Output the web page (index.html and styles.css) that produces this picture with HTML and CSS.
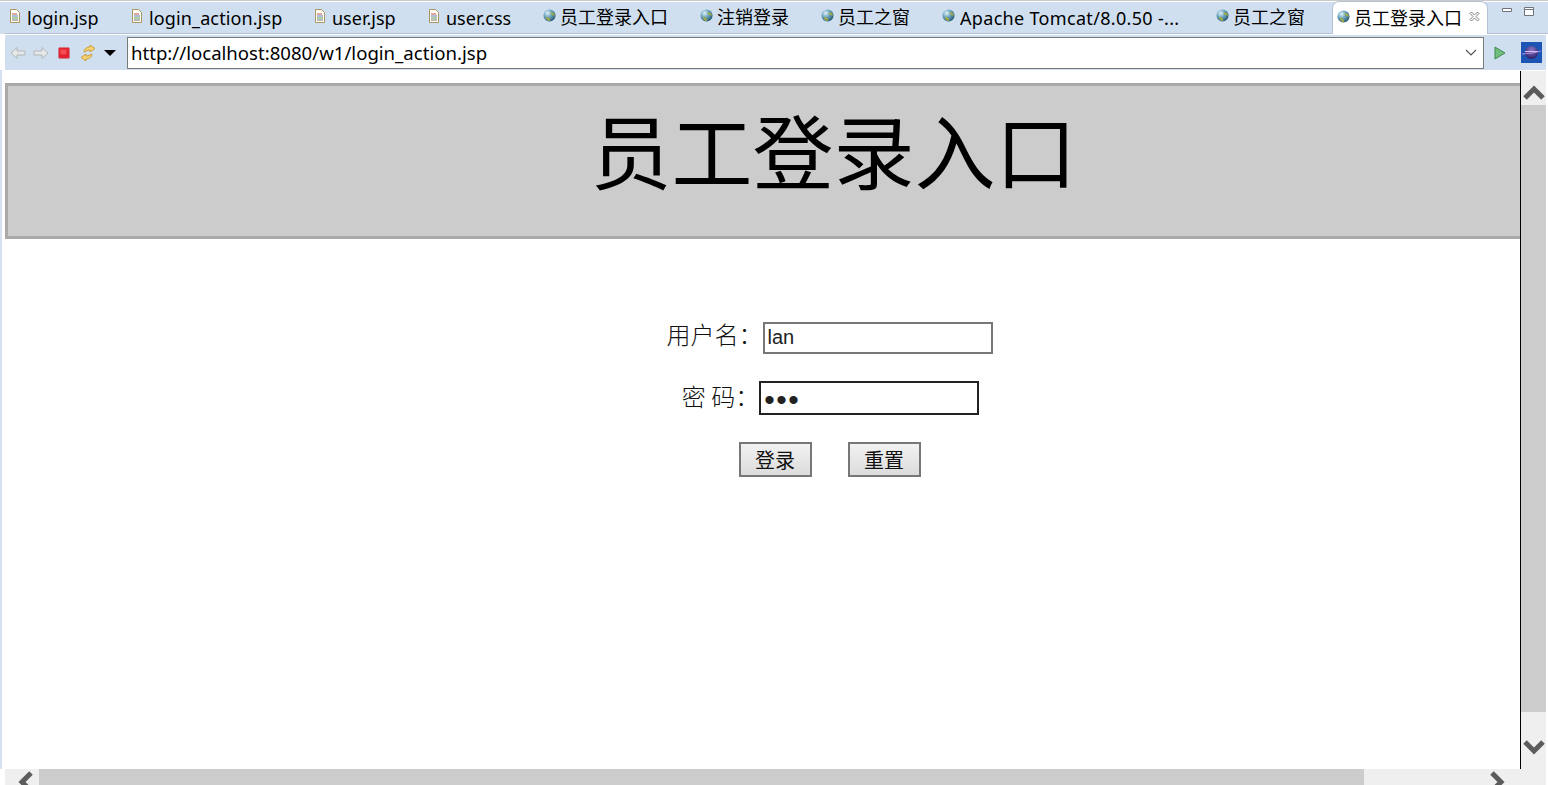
FILE: index.html
```html
<!DOCTYPE html>
<html lang="zh-CN">
<head>
<meta charset="utf-8">
<title>员工登录入口</title>
<link rel="stylesheet" href="styles.css">
</head>
<body>
<svg class="defs" width="0" height="0" aria-hidden="true">
  <defs>
    <radialGradient id="globe-fill" cx="35%" cy="30%" r="75%">
      <stop offset="0" stop-color="#e4f2f8"/>
      <stop offset=".45" stop-color="#6fa8c4"/>
      <stop offset="1" stop-color="#24566f"/>
    </radialGradient>
    <radialGradient id="planet-fill" cx="50%" cy="30%" r="70%">
      <stop offset="0" stop-color="#8d78c8"/>
      <stop offset="1" stop-color="#2a1f66"/>
    </radialGradient>
    <symbol id="doc" viewBox="0 0 12 14">
      <path d="M1.500.5h6l3 3v10h-9z" fill="#fffdf4" stroke="#a8955f"/>
      <path d="M3 5h5" stroke="#c05050"/><path d="M3 7h6" stroke="#5f7fb0"/>
      <path d="M3 9h6" stroke="#58a060"/><path d="M3 11h6" stroke="#777"/>
    </symbol>
    <symbol id="globe" viewBox="0 0 14 14">
      <circle cx="7" cy="7" r="6.500" fill="url(#globe-fill)"/>
      <path d="M3 9c2-1 3 0 4 1s1 3 0 3c-2 0-4-2-4-4zM8 4c2-1 4 0 5 3-2 0-3 0-4-1z" fill="#9aa84f"/>
    </symbol>
  </defs>
</svg>

<nav class="tabs">
  <div class="tab"><svg class="ico-doc"><use href="#doc"/></svg><span class="latin">login.jsp</span></div>
  <div class="tab"><svg class="ico-doc"><use href="#doc"/></svg><span class="latin latin-mid">login_action.jsp</span></div>
  <div class="tab"><svg class="ico-doc"><use href="#doc"/></svg><span class="latin">user.jsp</span></div>
  <div class="tab"><svg class="ico-doc"><use href="#doc"/></svg><span class="latin">user.css</span></div>
  <div class="tab tab-globe"><svg class="ico-globe"><use href="#globe"/></svg><span>员工登录入口</span></div>
  <div class="tab tab-globe"><svg class="ico-globe"><use href="#globe"/></svg><span>注销登录</span></div>
  <div class="tab tab-globe"><svg class="ico-globe"><use href="#globe"/></svg><span>员工之窗</span></div>
  <div class="tab tab-globe"><svg class="ico-globe"><use href="#globe"/></svg><span class="latin latin-long">Apache Tomcat/8.0.50 -...</span></div>
  <div class="tab tab-globe"><svg class="ico-globe"><use href="#globe"/></svg><span>员工之窗</span></div>
  <div class="tab tab-active">
    <svg class="ico-globe"><use href="#globe"/></svg><span>员工登录入口</span>
    <svg class="ico-close" viewBox="0 0 11 11"><path d="M1 2.500 2.500 1 5.500 4 8.500 1 10 2.500 7 5.500 10 8.500 8.500 10 5.500 7 2.500 10 1 8.500 4 5.500z" fill="#fff" stroke="#808080"/></svg>
  </div>
  <div class="win-btns">
    <svg class="win-btn" viewBox="0 0 11 11"><path d="M.5 2.500h9v3h-9z" fill="#fff" stroke="#6f747c"/></svg>
    <svg class="win-btn" viewBox="0 0 11 11"><path d="M.5 1.500h9v8h-9z" fill="#fff" stroke="#6f747c"/><path d="M.5 3.500h9" stroke="#6f747c"/></svg>
  </div>
</nav>

<div class="toolbar">
  <div class="nav-icons">
    <svg class="tool" viewBox="0 0 16 16"><path d="M1 8 7 2.500V6h8v4H7v3.500z" fill="#e6e8e8" stroke="#b4b7b7"/></svg>
    <svg class="tool" viewBox="0 0 16 16"><path d="M15 8 9 2.500V6H1v4h8v3.500z" fill="#e6e8e8" stroke="#b4b7b7"/></svg>
    <svg class="tool" viewBox="0 0 16 16"><rect x="2.500" y="2.500" width="11" height="11" rx="1.500" fill="#e4202e" stroke="#c98088"/><rect x="4.500" y="4.500" width="6" height="5" fill="#f24c55"/></svg>
    <svg class="tool tool-sync" viewBox="0 0 16 16"><path d="M4 7c0-3 3-5 6-5V0l5 3.500L10 7V5C8 5 6 6 4 7z" fill="#f5d273" stroke="#c9982f" stroke-width=".9"/><path d="M12 9c0 3-3 5-6 5v2l-5-3.500L6 9v2c2 0 4-1 6-2z" fill="#f5d273" stroke="#c9982f" stroke-width=".9"/></svg>
    <svg class="tool-drop" viewBox="0 0 12 6"><path d="M0 0h12L6 6z" fill="#000"/></svg>
  </div>
  <div class="address">
    <span class="address-text">http://localhost:8080/w1/login_action.jsp</span>
    <svg class="address-arrow" viewBox="0 0 12 7"><path d="M1 1l5 5 5-5" fill="none" stroke="#555" stroke-width="1.200"/></svg>
  </div>
  <svg class="go" viewBox="0 0 12 14"><path d="M1 1l10 6-10 6z" fill="#6fbe7c" stroke="#3f8a50"/></svg>
  <svg class="eclipse" viewBox="0 0 21 21">
    <rect width="21" height="21" fill="#1d55b5"/>
    <circle cx="10.500" cy="10.500" r="6.500" fill="url(#planet-fill)"/>
    <path d="M4 9.500h13" stroke="#d9c4f2"/>
    <path d="M1 12c6-.5 13-1 19-3" stroke="#b58adf" fill="none"/>
  </svg>
</div>

<div class="workspace">
  <div class="viewport">
    <main class="page">
      <h1 class="banner">员工登录入口</h1>
      <form class="login">
        <div class="row"><label class="field-label field-label-user" for="user">用户名：</label><input class="field" id="user" type="text" value="lan"></div>
        <div class="row row-pass"><label class="field-label" for="pass">密 码：</label><input class="field field-focus" id="pass" type="password" value="123"></div>
        <div class="actions"><button class="btn" type="button">登录</button><button class="btn" type="reset">重置</button></div>
      </form>
    </main>
  </div>
  <div class="vbar">
    <div class="vbar-end"><svg class="chev" viewBox="0 0 22 15"><path d="M2 13 11 4l9 9" fill="none" stroke="#5c5c5c" stroke-width="5"/></svg></div>
    <div class="vbar-thumb"></div>
    <div class="vbar-end vbar-end-low"><svg class="chev" viewBox="0 0 22 15"><path d="M2 2l9 9 9-9" fill="none" stroke="#5c5c5c" stroke-width="5"/></svg></div>
  </div>
</div>

<div class="hbar">
  <div class="hbar-end"><svg class="chev-h" viewBox="0 0 15 22"><path d="M13 2 4 11l9 9" fill="none" stroke="#5c5c5c" stroke-width="5"/></svg></div>
  <div class="hbar-thumb"></div>
  <div class="hbar-rest"><svg class="chev-h" viewBox="0 0 15 22"><path d="M2 2l9 9-9 9" fill="none" stroke="#5c5c5c" stroke-width="5"/></svg></div>
</div>
</body>
</html>
```
FILE: styles.css
```css
* { box-sizing: border-box; }
html, body { margin: 0; height: 100%; overflow: hidden; }
body {
  width: 1548px;
  height: 785px;
  background: #fff;
  display: flex;
  flex-direction: column;
  font-family: "Noto Sans", "Noto Sans CJK SC", sans-serif;
  color: #000;
}
.defs { position: absolute; }

/* tab strip */
.tabs {
  height: 35px;
  flex: none;
  padding-left: 4px;
  display: grid;
  grid-template-columns: 122px 183px 114px 115px 157px 121px 121px 274px 121px 156px 60px;
  background: linear-gradient(#cfdfef, #cfdfef) 0 1px / 100% 32px no-repeat, #fff;
  border-top: 1px solid #c9c9c9;
  position: relative;
}
.tabs::after {
  content: "";
  position: absolute;
  left: 5px; right: 0; top: 32px;
  height: 1px;
  background: #b4c0d4;
}
.tab {
  height: 32px;
  display: flex;
  align-items: center;
  gap: 6px;
  padding-left: 5px;
  font-size: 18px;
  line-height: 32px;
  white-space: nowrap;
}
.tab-globe { gap: 4px; }
.latin { padding-top: 1px; }
.latin-mid { letter-spacing: .13px; }
.latin-long { letter-spacing: .32px; margin-left: 1px; }
.tab-active {
  position: relative;
  z-index: 1;
  height: 33px;
  background: #fff;
  border: 1px solid #b4c0d4;
  border-bottom: 0;
  border-radius: 7px 7px 0 0;
  padding-left: 4px;
  gap: 4px;
}
.ico-doc { width: 12px; height: 14px; flex: none; margin-bottom: 3px; }
.ico-globe { width: 13px; height: 13px; flex: none; margin-bottom: 3px; }
.ico-close { width: 11px; height: 11px; margin-left: 3px; margin-bottom: 4px; }
.win-btns { display: flex; gap: 11px; padding: 5px 0 0 14px; }
.win-btn { width: 11px; height: 11px; }

/* toolbar */
.toolbar {
  height: 35px;
  flex: none;
  margin-left: 5px;
  margin-right: 2px;
  background: #cfdfef;
  display: flex;
  align-items: center;
}
.nav-icons { width: 122px; flex: none; display: flex; align-items: center; padding-left: 5px; gap: 7px; }
.tool { width: 16px; height: 16px; flex: none; }
.tool-sync { margin-left: 1px; margin-right: -1px; }
.tool-drop { width: 12px; height: 6px; margin-left: 2px; }
.address {
  width: 1357px;
  height: 32px;
  flex: none;
  background: #fff;
  border: 1px solid #7a7a7a;
  display: flex;
  align-items: center;
  justify-content: space-between;
  padding: 0 6px 0 3px;
  font-size: 18.600px;
}
.address-arrow { width: 12px; height: 7px; }
.go { width: 12px; height: 14px; margin-left: 10px; flex: none; }
.eclipse { width: 21px; height: 21px; margin-left: 15px; flex: none; }

/* content */
.workspace {
  flex: 1;
  min-height: 0;
  display: flex;
  padding-top: 1px;
  border-left: 2px solid #d5e0f0;
  padding-right: 2px;
}
.viewport { flex: 1; min-width: 0; overflow: hidden; border-right: 1px solid #000; }
.page { width: 1653px; margin-left: 1px; padding-top: 12px; }
.banner {
  margin: 0 -4px 0 2px;
  height: 156px;
  padding-left: 2px;
  background: #ccc;
  border: 3px solid #aaa;
  font-family: "Noto Sans CJK SC", sans-serif;
  font-weight: 400;
  font-size: 81px;
  line-height: 124px;
  text-align: center;
}
.login {
  padding-top: 83px;
  display: flex;
  flex-direction: column;
  align-items: center;
  gap: 27px;
}
.row { display: flex; align-items: center; }
.row-pass { padding-left: 2px; }
.field-label {
  font-family: "Noto Sans CJK SC", sans-serif;
  font-size: 24px;
  line-height: 30px;
  font-weight: 300;
  margin-top: -4px;
  color: #111;
}
.field-label-user { margin-top: -8px; }
.field {
  width: 230px;
  height: 32px;
  border: 2px solid #777;
  background: #fff;
  padding: 0 3px 2px;
  font-family: "Liberation Sans", sans-serif;
  font-size: 20px;
  color: #222;
  outline: 0;
}
.field-focus {
  width: 220px;
  height: 34px;
  border-color: #222;
  padding: 3px 3px 0;
  font-size: 30px;
  letter-spacing: 1.500px;
}
.actions { display: flex; gap: 36px; }
.btn {
  width: 73px;
  height: 35px;
  padding: 0;
  border: 2px solid #777;
  background: linear-gradient(#f2f2f2, #dcdcdc);
  font-family: "Noto Sans CJK SC", sans-serif;
  font-size: 20px;
  line-height: 30px;
  color: #111;
}

/* scrollbars */
.vbar {
  width: 25px;
  flex: none;
  background: #efefef;
  display: flex;
  flex-direction: column;
}
.vbar-end { height: 34px; flex: none; display: flex; justify-content: center; align-items: center; padding-top: 8px; }
.vbar-end-low { height: 57px; align-items: flex-end; padding: 0 0 14px; }
.vbar-thumb { flex: 1; background: #ccc; }
.chev { width: 22px; height: 15px; }
.hbar {
  height: 16px;
  flex: none;
  margin: 0 2px 0 5px;
  background: #efefef;
  display: flex;
  overflow: hidden;
}
.hbar-end { width: 34px; flex: none; padding: 2px 0 0 13px; }
.hbar-thumb { width: 1325px; flex: none; background: #ccc; }
.hbar-rest { flex: 1; padding: 2px 0 0 126px; }
.chev-h { width: 15px; height: 22px; display: block; }
```
